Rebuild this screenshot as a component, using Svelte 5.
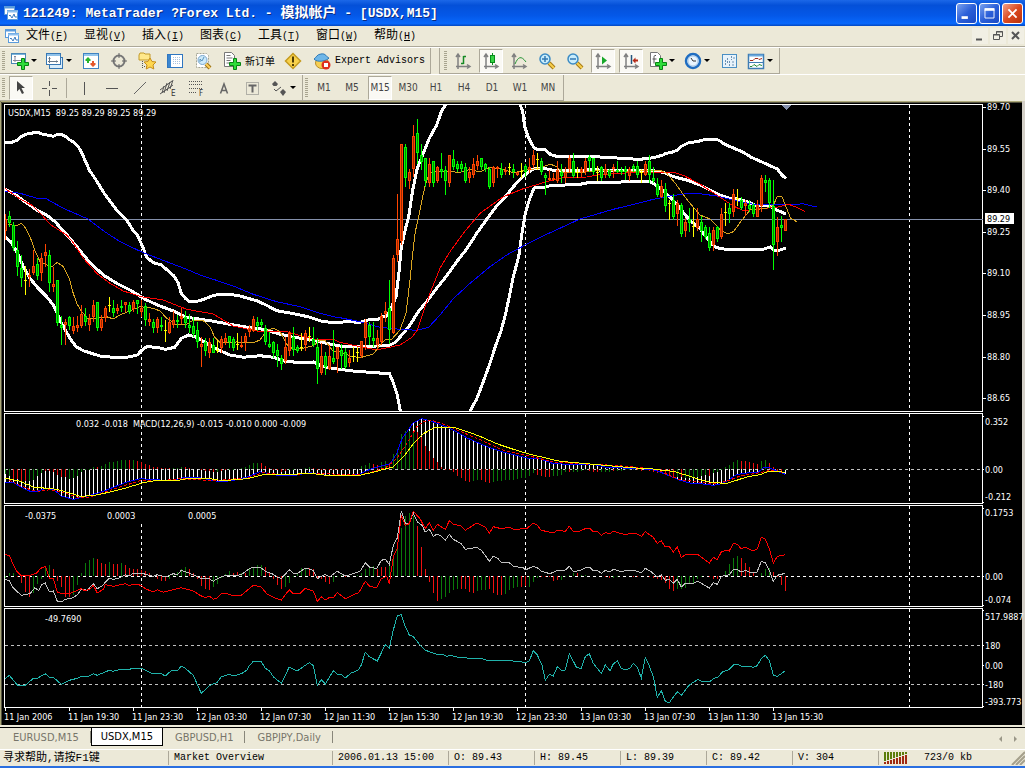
<script lang="ts">
	type Dot = [number, number];

	const menus = [
		['文件', 'F'],
		['显视', 'V'],
		['插入', 'I'],
		['图表', 'C'],
		['工具', 'T'],
		['窗口', 'W'],
		['帮助', 'H']
	];

	const chartIcon =
		'<path d="M4 3v14M2 14.500h13M2 5l2-3 2 3M13 12.500l3 2-3 2" fill="none" stroke="#808080" stroke-width="1.500"/>';
	const plus =
		'<path d="M10.500 6.500h3v4h4v3h-4v4h-3v-4h-4v-3h4z" fill="#2fdc3a" stroke="#078413"/>';
	const lens =
		'<path d="M11 11l5 5" stroke="#a67a14" stroke-width="4"/><path d="M11 11l5 5" stroke="#f8cf4c" stroke-width="2"/><circle cx="7" cy="7" r="5" fill="#c9ecfb" stroke="#3b8bc4" stroke-width="1.500"/>';

	const icons: Record<string, string> = {
		newChart:
			'<rect x=".5" y="1.500" width="14" height="10" fill="#fff" stroke="#4a86b4"/><path d="M1 2.500h13" stroke="#79b4dc"/><path d="M4 4v6M2 8.500h9M3 5l1-1 1 1" fill="none" stroke="#889"/>' + plus,
		profiles:
			'<rect x="3.500" y="5.500" width="13" height="11" fill="#d9edfb" stroke="#3878b4"/><rect x=".5" y="1.500" width="14" height="11" fill="#fff" stroke="#3878b4"/><path d="M1 3h13" stroke="#8fc2ea" stroke-width="2"/><path d="M3.500 5v6M2 9.500h10M2.500 6.500l1-1 1 1M10.500 8.500l1 1-1 1" fill="none" stroke="#678"/>',
		market:
			'<rect x="1.500" y="1.500" width="15" height="15" fill="#fff" stroke="#3f83c2"/><path d="M2 3h14" stroke="#94c6ec" stroke-width="2"/><path d="M6 5l3 3-1 1H7v2H5V9H4L3 8z" fill="#28b52c"/><path d="M11 15l-3-3 1-1h1V9h2v2h1l1 1z" fill="#e4572a"/>',
		target:
			'<circle cx="9" cy="9" r="5.500" fill="none" stroke="#777" stroke-width="2"/><path d="M9 1v5M9 12v5M1 9h5M12 9h5" stroke="#666"/>',
		folder:
			'<path d="M1 3l1-2h4l1 1h5v6H1z" fill="#ffe88a" stroke="#c39a29"/><path d="M4.500 9v8M6 14.500h3" stroke="#555" stroke-dasharray="1 1"/><path d="M12 6l2 3.500 4 .5-3 3 .8 4-3.800-2-3.800 2 .8-4-3-3 4-.5z" fill="#ffd74f" stroke="#c68e1b"/>',
		terminal:
			'<rect x="1.500" y="2.500" width="15" height="13" fill="#fff" stroke="#2f76c0"/><rect x="2" y="3" width="3" height="12" fill="#3b86d0"/><path d="M7 5.500h8M7 7.500h8M7 9.500h8M7 11.500h8" stroke="#a8c2df" stroke-dasharray="1 1"/>',
		tester:
			'<path d="M2.500 1.500h10l2 2v12h-12z" fill="#fff" stroke="#a5a593" stroke-dasharray="2 1"/><path d="M12 12l4 4" stroke="#9b7218" stroke-width="4"/><path d="M12 12l4 4" stroke="#ffd05a" stroke-width="2"/><circle cx="8.500" cy="8" r="4.500" fill="#cdeafa" stroke="#7aa6cc"/><path d="M6 10V7l2 2 2-4" fill="none" stroke="#5892bd"/>',
		order:
			'<path d="M1.500.5h7l3 3v11h-10z" fill="#fff" stroke="#777"/><path d="M3.500 3.500h4M3.500 6h6M3.500 8.500h4M3.500 11h3" stroke="#777"/>' + plus,
		warning:
			'<path d="M9 1.500L16.500 9 9 16.500 1.500 9z" fill="#f8d14b" stroke="#c59b20" stroke-width="1.500"/><path d="M9 4.500v6M9 12v2" stroke="#4f3c05" stroke-width="2"/>',
		expert:
			'<ellipse cx="9" cy="11" rx="6.500" ry="5.500" fill="#f7cf52" stroke="#b98c25"/><path d="M1 7c2-1 3-5 7-5 5-1 5 3 8 4-2 3-12 5-15 1z" fill="#6eb6e8" stroke="#2f79b5"/><circle cx="13" cy="13" r="4.500" fill="#df2f1d"/><rect x="11" y="11" width="4" height="4" fill="#fff"/>',
		bars: chartIcon + '<path d="M9.500 4v8M7 11.500h2.500M9.500 4.500H12" fill="none" stroke="#168a24" stroke-width="1.500"/>',
		candles:
			chartIcon + '<path d="M10.500 1v12" stroke="#088b1b"/><rect x="8.500" y="3.500" width="4" height="7" fill="#35d443" stroke="#088b1b"/>',
		line: chartIcon + '<path d="M5 12c3-7 6-9 11-2" fill="none" stroke="#279436"/>',
		zoomIn: lens + '<path d="M7 4v6M4 7h6" stroke="#3279b3" stroke-width="1.500"/>',
		zoomOut: lens + '<path d="M4 7h6" stroke="#3279b3" stroke-width="1.500"/>',
		scroll: chartIcon + '<path d="M8 4.500l5 4-5 4z" fill="#18a82a"/>',
		shift: chartIcon + '<path d="M9.500 3v9" stroke="#24557c" stroke-width="1.500"/><path d="M10.500 8.500l3-3v2H16v2h-2.500v2z" fill="#b52a17"/>',
		indicator:
			'<path d="M1.500.5h7l3 3v11h-10z" fill="#fff" stroke="#777"/><path d="M7 3.500c-2-.5-2 1-2 2v6M3.500 7h4" fill="none" stroke="#555"/>' + plus,
		clock:
			'<circle cx="9" cy="9" r="7" fill="#e9f5ff" stroke="#1f6dc1" stroke-width="2.500"/><circle cx="9" cy="9" r="5" fill="none" stroke="#a9c9e6"/><path d="M7 6l2 3h3" fill="none" stroke="#333"/>',
		template:
			'<rect x="2.500" y="2.500" width="14" height="13" fill="#e8f3fb" stroke="#4a8fc4"/><path d="M5.500 8v6M7.500 6v5M9.500 9v5M11.500 4v4M14 5v2M13 9v5" stroke="#6d91b2" stroke-dasharray="2 1"/>',
		windows:
			'<rect x="1.500" y="2.500" width="15" height="14" fill="#fff" stroke="#3f7db4" stroke-width="1.500"/><path d="M2 3.500h14" stroke="#6ba9dd" stroke-width="2"/><path d="M2 10.500h14" stroke="#3f7db4"/><path d="M3 8.500h3l2-2h3l1 1 3-1" fill="none" stroke="#a02818"/><path d="M3 14.500h2l2-2 3 2 2-2 3 1" fill="none" stroke="#248b36"/>',
		cursor: '<path d="M5 2l8 7H9.500l2.500 5-2 1-2.500-5L5 12.500z" fill="#444"/>',
		cross: '<path d="M9.500 2v5M9.500 11v6M2 9.500h5M12 9.500h5" stroke="#555"/>',
		vline: '<path d="M9.500 3v13" stroke="#555"/>',
		hline: '<path d="M3 9.500h12" stroke="#555"/>',
		trend: '<path d="M3 15L15 3" stroke="#666"/>',
		channel:
			'<path d="M1 11L13 2M1 15L14 6M5 7l-2 7M8 4L5 14M11 3L8 12M14 1l-3 9" stroke="#555"/><text x="12" y="17">E</text>',
		fibo:
			'<path d="M2 2.500h14M2 5.500h14M2 9.500h14M2 13.500h8" stroke="#555" stroke-dasharray="1 1"/><text x="12" y="17">F</text>',
		letter: '<path d="M5.500 14.500L9 5l3.500 9.500M7 11.500h4" fill="none" stroke="#666" stroke-width="1.500"/>',
		label:
			'<rect x="3.500" y="3.500" width="12" height="12" fill="none" stroke="#777" stroke-dasharray="1 1"/><path d="M5.500 6.500h8M9.500 6.500v7" stroke="#666" stroke-width="2"/>',
		arrows:
			'<path d="M2 5l3-3 3 3-1.500 2h-3z" fill="#555"/><path d="M4 10l2 2 5-4" fill="none" stroke="#555"/><path d="M10 13l3-3 3 3-3 4z" fill="#555"/>'
	};

	const mainTools = [
		{ icon: 'newChart', title: 'New chart', drop: true },
		{ icon: 'profiles', title: 'Profiles', drop: true },
		{ icon: 'market', title: 'Market watch' },
		{ icon: 'target', title: 'Data window' },
		{ icon: 'folder', title: 'Navigator' },
		{ icon: 'terminal', title: 'Terminal' },
		{ icon: 'tester', title: 'Strategy tester' },
		{ icon: 'order', title: 'New order', label: '新订单' },
		{ icon: 'warning', title: 'Editor' },
		{ icon: 'expert', title: 'Experts', label: 'Expert Advisors' }
	];

	const viewTools = [
		{ icon: 'bars', title: 'Bar chart' },
		{ icon: 'candles', title: 'Candlesticks', on: true },
		{ icon: 'line', title: 'Line chart' },
		{ icon: 'zoomIn', title: 'Zoom in' },
		{ icon: 'zoomOut', title: 'Zoom out' },
		{ icon: 'scroll', title: 'Auto scroll', on: true },
		{ icon: 'shift', title: 'Chart shift', on: true },
		{ icon: 'indicator', title: 'Indicators', drop: true },
		{ icon: 'clock', title: 'Periods', drop: true },
		{ icon: 'template', title: 'Templates' },
		{ icon: 'windows', title: 'Indicator windows', drop: true }
	];

	const drawTools = [
		{ icon: 'vline', title: 'Vertical line' },
		{ icon: 'hline', title: 'Horizontal line' },
		{ icon: 'trend', title: 'Trendline' },
		{ icon: 'channel', title: 'Channel' },
		{ icon: 'fibo', title: 'Fibonacci' },
		{ icon: 'letter', title: 'Text' },
		{ icon: 'label', title: 'Text label' },
		{ icon: 'arrows', title: 'Arrows', drop: true }
	];

	const frames = ['M1', 'M5', 'M15', 'M30', 'H1', 'H4', 'D1', 'W1', 'MN'];
	let frame = $state('M15');

	const symbols = ['EURUSD,M15', 'USDX,M15', 'GBPUSD,H1', 'GBPJPY,Daily'];
	let symbol = $state('USDX,M15');

	// Series are kept in thirds of a pixel; bars are four pixels apart.
	const unit = 3;
	const barX = (i: number) => 5 + i * 4;

	function points(top: number, ...parts: [number, string][]): Dot[] {
		return parts.flatMap(([left, text]) =>
			text.split(' ').map((p) => {
				const [x, y] = p.split(',').map(Number);
				return [left + x / unit, top + y / unit] as Dot;
			})
		);
	}

	function line(dots: Dot[]) {
		return dots.map(([x, y]) => `${x.toFixed(1)},${y.toFixed(1)}`).join(' ');
	}

	function at(dots: Dot[], x: number) {
		const n = dots.findIndex((d) => d[0] >= x);
		if (n < 1) return dots[n === 0 ? 0 : dots.length - 1][1];
		const [a, b] = [dots[n - 1], dots[n]];
		return a[1] + ((b[1] - a[1]) * (x - a[0])) / (b[0] - a[0] || 1);
	}

	// colour, high, body top, body bottom, low
	const candles = (
		'R343,357,393,420 G333,348,370,380 G366,376,443,452 G424,450,500,527 G465,505,533,560 Y497,541,541,585 R507,526,532,560 R450,497,518,526 G475,492,527,540 R458,475,518,543 ' +
		'R432,457,467,500 G450,466,550,575 R500,551,560,575 G540,541,668,678 G648,675,683,735 R657,667,676,735 G648,650,677,690 R650,677,692,703 R648,676,683,695 R615,641,677,683 ' +
		'G624,649,667,677 R641,658,676,692 R600,616,650,665 G605,607,683,692 R645,658,683,692 R617,625,653,665 Y590,616,616,635 G600,625,640,650 R613,625,633,643 G600,617,625,635 ' +
		'R605,607,614,635 G605,615,635,643 R600,607,627,635 G600,601,613,643 R600,625,635,650 G610,617,659,677 R640,658,667,677 G657,667,683,700 R650,658,683,700 G650,675,682,692 ' +
		'Y660,691,691,725 R650,667,700,702 R632,659,675,683 G645,659,667,685 R625,649,658,672 G633,650,668,683 G641,676,683,700 G650,677,702,712 G667,690,727,743 R710,733,741,800 ' +
		'G715,725,752,768 R715,725,758,775 G715,735,758,760 Y720,750,750,760 R707,716,743,760 R700,715,725,735 G707,709,725,743 G710,716,743,752 Y700,733,733,750 R708,735,742,745 ' +
		'R700,709,725,752 R675,683,697,710 R648,657,692,695 G650,667,677,692 G657,667,675,683 G675,683,725,735 G697,732,742,743 G723,725,758,775 G733,751,768,800 G765,775,792,810 ' +
		'R710,740,783,792 R692,700,752,768 G682,710,750,768 G735,741,752,760 Y700,742,742,752 R690,700,735,752 Y682,709,709,725 G682,717,735,740 G715,742,808,852 R730,767,818,825 ' +
		'G757,767,800,825 R735,767,808,810 G690,775,785,792 R740,742,777,818 G733,751,767,808 G745,757,800,808 R750,775,790,800 Y742,767,767,785 Y742,757,757,785 R722,724,767,775 ' +
		'R657,667,715,750 G665,676,710,735 G665,715,724,740 R690,715,735,750 R640,649,725,735 R605,633,641,665 G540,625,691,733 R465,475,700,702 R282,418,466,486 R132,133,424,435 ' +
		'G132,142,235,260 R207,217,242,268 R75,109,208,232 G57,100,160,193 G133,166,185,210 G173,175,242,260 R173,193,250,260 G182,184,250,260 R198,200,242,250 G158,208,217,235 ' +
		'G198,209,242,285 R165,166,250,260 G150,176,200,210 G182,192,208,215 G182,192,208,215 G190,200,242,250 R200,217,235,250 R175,192,225,235 R165,183,198,210 G173,175,200,210 ' +
		'G190,192,208,215 G200,208,260,268 R198,200,250,260 R198,200,208,235 G190,208,225,235 R200,210,217,225 Y190,200,200,225 G192,208,217,235 R215,217,226,228 Y190,213,213,235 ' +
		'G192,198,217,230 R175,200,210,220 R150,166,195,203 Y160,176,176,210 G175,184,217,225 G220,226,235,285 R210,234,241,243 R220,234,241,243 R184,210,242,250 G192,215,227,250 ' +
		'R200,217,235,250 R165,175,207,220 G160,183,227,235 Y200,217,217,235 R200,208,217,232 R175,184,217,225 G165,170,184,215 G173,175,217,225 Y198,217,217,243 G198,200,235,243 ' +
		'R192,207,225,235 G208,210,227,235 R192,200,208,235 G182,209,217,220 G200,210,217,225 G198,208,217,240 R200,208,227,243 G192,199,208,217 G182,199,226,235 Y208,217,217,250 ' +
		'R183,193,226,228 G165,184,226,250 G200,234,243,250 G235,251,285,292 R240,258,292,293 G250,268,317,335 Y300,310,310,360 G283,300,350,360 R300,310,343,378 G308,316,402,410 ' +
		'R355,367,392,410 G325,357,368,395 Y325,377,377,410 R325,357,383,392 G348,367,393,427 G375,382,410,418 G380,400,443,452 R380,391,435,452 G378,382,418,425 R325,343,410,418 ' +
		'Y308,335,335,378 G310,325,343,368 R267,283,335,350 Y267,293,293,318 G290,300,325,330 R300,309,317,348 G300,315,328,335 G308,316,343,350 R300,316,350,352 R225,235,317,335 ' +
		'G225,240,250,275 G235,240,310,325 G240,317,434,510 R350,382,425,468 G348,376,383,425 R358,358,392,393'
	)
		.split(' ')
		.map((c, i) => {
			const [high, top, bottom, low] = c.slice(1).split(',').map((v) => 100 + Math.round(Number(v) / unit));
			return { kind: c[0], x: barX(i), high, top, bottom, low };
		});

	const candleColor: Record<string, string> = { R: '#ff4500', G: '#00ff00', Y: '#ffff00' };
	const candleFill: Record<string, string> = { R: '#9c2a00', G: '#008c00', Y: '#ffff00' };

	const bands = [
		points(100,
			[0, '14,127 38,126 52,120 66,108 84,101 112,97 126,102 160,109 172,103 184,103 198,110 206,118 222,127 236,142 248,165 268,210 290,243 312,279 350,330 380,360 400,392 412,405 428,440 440,472 460,488 484,495 504,512 522,528 534,548 544,580 556,595 568,604 590,604 612,598 636,588 656,583 690,583 720,588 740,594 770,602 800,616 830,632 870,639 900,645 930,652 962,663 990,667'],
			[340, '0,667 20,665 60,667 84,660 114,658 130,650 140,648 150,632 168,590 176,525 184,440 198,380 206,350 218,270 232,205 250,160 268,115 290,75 304,35 322,6']
		),
		points(100,
			[340, '538,6 548,35 554,80 566,115 582,143 592,148 616,149 632,164 650,169 700,171 770,170 800,173 860,175 900,179'],
			[620, '60,178 100,173 130,165 136,160 154,158 172,150 184,139 206,128 230,125 250,120 290,118 300,123 314,133 340,144 368,156 394,172 424,185 452,198 472,207 486,225 498,236']
		),
		points(100,
			[0, '14,268 40,280 80,309 112,331 140,345 166,366 190,393 210,415 240,452 270,488 310,525 350,550 390,570 436,598 470,614 520,633 556,651 590,656 630,662 680,671 730,680 790,688 830,700 880,712 930,718 960,726'],
			[340, '0,738 60,740 110,738 150,735 166,727 190,700 210,675 236,633 264,600 290,565 320,527 350,485 380,447 410,400 440,358 470,318 500,286 520,260 548,230 568,215 580,207 600,204 620,207 640,211 680,213 750,209 800,211 900,213'],
			[620, '100,212 130,217 150,226 172,233 200,240 240,255 270,270 300,285 330,295 360,298 390,308 410,317 450,318 470,330 498,342']
		),
		points(100,
			[0, '14,410 32,425 52,458 70,500 90,535 112,562 140,590 160,615 172,640 182,665 196,690 210,715 228,740 250,752 300,768 340,772 380,772 412,765 424,752 440,740 470,742 496,748 524,742 544,715 566,705 590,712 620,730 650,748 690,765 730,772 780,767 820,772 860,785 900,787 940,786 968,800 1000,805'],
			[340, '0,808 40,813 130,820 148,820 160,848 172,885 182,940']
		),
		points(100,
			[340, '386,940 410,897 430,845 450,790 466,740 484,690 496,645 508,590 520,530 536,470 546,400 556,340 568,300 582,264 614,262 630,257 720,253 750,247 820,247 900,244'],
			[620, '90,245 104,252 130,272 154,295 180,325 210,362 240,385 256,408 276,432 290,443 330,450 400,449 430,448 450,441 462,451 480,450 498,444']
		)
	];

	const averages = [
		{
			color: '#0000ff',
			dots: points(100,
				[0, '14,274 60,280 112,295 140,297 190,325 264,357 310,392 360,425 430,458 500,485 560,508 600,525 640,538 700,558 760,583 830,605 900,620 960,640 1000,650'],
				[340, '0,653 60,665 120,682 180,688 230,691 266,682 300,645 340,596 390,550 450,500 500,465 550,438 620,403 720,357 820,328 900,308'],
				[620, '100,298 150,288 200,281 240,281 290,288 340,300 400,313 450,314 520,314 550,311 570,317 592,320']
			)
		},
		{
			color: '#ff0000',
			dots: points(100,
				[0, '14,265 60,297 100,318 126,345 150,373 200,405 220,428 250,475 290,520 330,550 370,573 424,590 490,600 560,628 640,642 700,678 780,695 860,695 940,718 1000,718'],
				[340, '0,727 50,738 110,750 180,735 216,712 232,690 252,630 270,580 300,505 330,455 370,400 420,340 490,290 550,266 620,245 670,232 740,231 780,224 900,216'],
				[620, '160,216 190,226 240,252 290,285 340,318 370,332 410,327 470,322 506,313 530,322 556,335']
			)
		},
		{
			color: '#daa520',
			dots: points(100,
				[0, '24,373 50,378 64,370 76,383 90,410 104,450 120,485 136,493 156,500 172,487 190,500 208,535 218,575 230,610 244,633 262,655 290,655 320,650 340,657 360,645 390,632 420,620 460,625 480,633 500,655 530,675 560,673 580,660 610,662 630,680 644,712 660,728 710,726 760,728 780,720 800,692 820,684 840,695 860,733 880,748 910,745 940,737 960,722 976,722 1000,755'],
				[340, '0,755 30,768 60,773 100,762 120,735 138,718 155,718 180,690 198,640 210,540 218,460 226,395 236,350 246,300 256,255 268,220 300,213 360,217 390,208 420,216 450,202 490,208 520,218 560,210 600,205 630,192 650,200 670,218 720,218 780,210 850,215 900,213'],
				[620, '120,211 140,220 166,250 200,298 240,345 270,357 300,388 322,402 340,395 366,360 390,330 440,325 460,315 472,290 485,288 500,325 512,355 530,365']
			)
		}
	];

	const macd = points(412,
		[0, '14,210 40,212 64,225 90,238 110,238 136,230 160,232 184,252 220,262 250,255 280,247 310,238 340,226 380,210 420,200 450,202 510,206 560,195 600,197 640,206 670,209 700,205 740,196 780,179 820,188 850,192 890,189 930,182 980,190 1030,192 1080,186 1110,172'],
		[380, '0,163 30,155 50,125 66,80 84,55 100,32 125,20 150,26 200,45 230,60 260,77 300,95 330,107 370,120 440,138 480,140 520,155 570,157 640,157 680,166 780,170 820,173'],
		[660, '0,180 30,192 60,205 90,213 120,215 160,220 185,215 205,205 225,190 245,185 270,182 295,180 310,168 325,165 345,175 376,187']
	);
	const macdSlow = points(412,
		[0, '14,198 60,208 100,225 170,232 210,243 240,253 280,251 330,240 370,230 430,212 470,205 530,206 560,200 620,199 670,206 740,200 800,186 840,189 930,184 980,190 1080,190 1130,178'],
		[380, '0,175 40,165 70,135 100,95 130,65 165,46 220,46 250,55 300,73 350,95 400,112 450,127 540,148 640,157 750,167 820,171'],
		[660, '0,174 40,178 80,190 120,203 160,212 200,214 230,205 260,195 300,188 320,180 345,178 376,181']
	);
	const macdSignal = points(412,
		[0, '14,198 60,220 90,233 120,238 150,233 200,245 240,258 270,255 310,242 360,225 420,206 480,206 540,200 640,206 740,198 790,182 850,189 940,184 1080,189 1130,176'],
		[380, '20,165 50,140 80,95 110,45 130,28 155,25 200,40 250,62 300,83 370,115 440,130 520,150 600,155 700,160 820,170'],
		[660, '0,178 60,203 160,215 200,208 240,192 300,182 330,175 376,183']
	);

	const fast = points(412,
		[0, '14,428 28,430 40,458 52,480 64,492 90,490 112,482 120,470 136,463 148,498 160,500 172,540 184,545 208,545 244,530 252,535 268,533 280,520 292,543 310,532 316,518 340,523 376,515 388,521 400,516 424,520 436,530 460,540 472,533 490,541 520,533 544,527 580,537 600,550 616,557 628,552 640,562 652,558 664,545 676,543 700,552 724,550 760,520 784,525 800,545 820,556 844,564 868,533 880,546 900,545 916,529 940,537 952,568 964,554 976,564 990,555 1000,557 1012,542 1036,560 1060,548 1076,542 1096,508 1108,522 1130,528 1144,500 1160,492 1168,516 1180,435 1192,408 1204,310 1216,340 1228,335'],
		[380, '100,298 120,320 136,350 148,332 160,355 172,337 196,352 208,326 220,337 244,342 256,355 290,333 316,345 328,364 340,344 364,350 388,346 400,352 440,350 460,333 472,340 484,355 520,363 532,355 556,358 568,343 580,358 600,357 620,348 630,349 640,360 652,358 664,370 676,362 690,365 700,358 736,368 750,364 770,366 785,373 796,359 820,376 832,394 844,386 856,405 868,404 880,420 892,404'],
		[660, '64,437 76,428 112,426 148,453 160,436 172,443 184,420 196,415 208,417 220,394 232,397 244,411 256,405 280,417 292,411 304,376 316,382 328,410 340,453 352,433 376,428']
	);
	const slow = points(412,
		[0, '14,502 28,506 40,528 64,550 90,545 104,528 116,535 126,517 136,513 148,540 160,537 172,568 184,570 196,562 220,557 232,548 244,532 262,535 280,515 292,530 306,522 328,498 340,502 352,500 376,488 388,492 400,484 430,485 460,493 472,488 496,495 520,485 532,488 544,475 580,488 600,498 628,500 640,508 652,500 676,490 700,492 724,488 748,470 760,465 784,468 796,478 820,487 832,495 844,500 868,473 880,484 892,485 916,468 940,475 952,500 976,487 988,495 1012,478 1036,492 1060,485 1080,478 1096,452 1108,465 1130,470 1144,445 1156,442 1168,458 1180,400 1192,378 1204,298 1216,333 1228,333'],
		[380, '100,303 112,330 126,340 136,360 148,352 160,373 172,366 184,372 196,385 208,367 220,382 244,395 256,412 290,406 304,415 316,430 328,448 340,432 352,438 364,450 388,452 400,463 430,467 436,474 460,463 472,467 484,478 510,485 532,475 556,474 568,463 580,478 600,476 616,467 630,466 640,476 652,475 664,484 676,475 690,480 700,472 720,478 760,475 785,482 796,469 812,478 832,495 844,488 856,505 868,502 880,514 892,502'],
		[660, '64,525 76,514 100,514 112,508 126,515 148,528 160,512 172,517 184,493 208,488 220,473 232,473 244,480 256,475 270,482 290,482 304,448 316,452 328,475 340,508 352,490 376,484']
	);
	const cci = points(605,
		[0, '16,220 28,211 52,240 76,241 100,220 112,220 136,206 148,217 160,217 184,238 208,226 232,220 244,214 268,213 280,206 292,211 328,196 340,199 360,193 388,193 400,190 424,190 460,207 484,206 496,213 514,197 532,197 544,184 556,190 580,211 604,265 628,242 652,232 664,215 688,208 700,213 724,206 740,196 748,182 760,169 784,170 796,190 808,197 820,215 844,235 868,186 892,198 910,185 928,173 940,182 952,240 964,224 976,237 1000,197 1012,207 1024,208 1036,219 1052,205 1075,195 1084,180 1096,142 1108,155 1132,168 1156,119 1168,130 1180,75 1192,32 1204,29 1216,65 1228,90 1240,95 1260,120 1274,135 1310,148 1328,148 1340,154 1352,151 1370,156 1395,157 1408,162 1440,160 1470,168 1530,167'],
		[510, '30,170 46,173 58,168 70,137 82,150 96,180 106,226 118,208 130,213 142,185 156,197 166,195 178,146 200,188 214,190 226,155 238,146 250,175 274,205 286,180 300,197 310,177 322,168 334,190 346,195 360,190 370,175 382,187 394,219 406,157 418,183 430,215 442,277 454,257 466,289 478,293 502,260 514,271 538,240 564,223 576,230 598,231 612,220 624,216 638,200 656,194 670,180 684,178 694,184 718,184 730,187 742,182 754,160 766,151 778,167 790,210 802,214 824,199']
	);

	// Oscillator columns: G rising, R falling, height above the zero line
	const columns = (text: string, zero: number) =>
		text.split(' ').map((c, i) => {
			const h = Number(c.slice(1)) / unit;
			return { x: barX(i), top: Math.round(zero - Math.max(h, 0)), h: Math.round(Math.abs(h)), color: c[0] === 'G' ? '#0a7a0a' : '#f01010' };
		});

	const macdColumns = columns(
		'G-15 G-20 R-30 R-30 R-35 R-35 G-35 G-33 G-20 G-12 R-5 R-5 R-8 R-18 R-25 R-25 G-30 G-28 G-20 G-8 G-3 G-2 G5 R5 G8 G14 G20 G22 G24 G26 G27 R27 G27 R25 R22 R15 R12 R7 R5 R4 ' +
			'R2 R2 G3 G3 G6 R5 R2 R1 R1 R-3 R-5 R-7 R-8 G-8 R-5 R-4 G-3 G-2 G0 G2 G7 G13 G18 G19 R18 R10 R3 R-2 R-4 R-8 R-5 G-3 G-2 G0 G1 G3 G5 R2 R-3 R-3 ' +
			'R-2 R-2 R-3 R-3 R-2 R-2 R-2 R-1 G1 G8 G12 G18 R16 R12 G20 G25 R15 G45 G60 G105 G115 G115 G115 R112 R95 R70 R55 R32 R20 R7 R-2 R-3 R-10 R-20 R-27 R-35 R-38 G-35 G-32 R-33 ' +
			'R-38 R-43 G-40 G-37 G-36 G-33 G-32 G-32 G-30 G-28 G-27 G-20 G-13 R-17 R-22 R-24 R-25 G-20 G-20 G-19 G-10 R-8 G-10 G-10 G-7 G-4 R-6 R-8 R-8 G-10 G-10 G-8 R-7 G-5 G-5 G-4 G-3 G-2 R-4 R-5 ' +
			'R-4 R-6 R-9 R-12 R-12 R-15 R-20 R-25 G-25 R-25 G-27 G-27 G-25 G-25 G-20 G-18 R-22 G-12 G-8 G-3 G6 G13 G22 G27 R25 R25 R21 R17 R16 G25 G27 R18 R5 R-5 R-8 G-3',
		469
	);
	const spreadColumns = columns(
		'G-5 G10 G10 R-2 R-22 R-47 R-62 G-50 G-25 G-8 G28 G34 R20 R-15 R-32 R-62 R-62 G-58 G-28 G10 G40 G47 G55 R50 R38 R37 G41 R37 R37 G40 R33 R25 R22 R20 R19 R16 R8 R-3 R-10 R-14 ' +
			'R-15 G-8 G4 G12 G22 G27 R20 R10 R-8 R-30 R-38 R-42 G-33 G-23 G-5 G5 G15 R10 R12 G10 R8 G22 G25 G32 G33 R28 R12 R-8 R-28 R-40 G-33 G-20 G-4 G8 G24 G24 R24 R20 R-5 R-10 ' +
			'R-18 R-25 G-18 G-4 G2 R-2 R-1 G1 G2 G10 G22 G25 G30 R22 R27 R27 G40 G60 G80 G145 G180 G190 G180 R150 R88 R20 R-18 R-50 R-74 G-70 G-64 G-52 G-42 G-38 R-40 R-40 R-47 R-50 G-46 G-43 ' +
			'G-42 R-40 R-50 R-56 R-56 G-53 G-42 G-35 G-32 R-32 R-30 G-33 G-18 G-5 R-2 R-4 R-4 R-14 R-13 G-12 G-2 G4 G10 R8 G2 G4 G1 R0 R-1 R-1 R-2 R-7 G-5 G-2 G0 R0 R0 R-2 R-2 G0 ' +
			'G0 R-2 R-6 R-10 R-13 R-22 R-40 R-44 G-40 G-40 G-37 G-25 G-20 G-8 G-4 G0 R-4 R-8 R-10 G0 G15 G35 G53 G60 R55 R40 R28 R8 G0 G8 G22 G25 R12 R-4 R-28 R-44',
		576
	);

	const macdBars = candles.map((c) => {
		const y = Math.round(at(macd, c.x));
		return { x: c.x, top: Math.min(469, y), h: Math.abs(469 - y) };
	});

	const panes = [
		{ y: 104, h: 307 },
		{ y: 413, h: 90 },
		{ y: 505, h: 101 },
		{ y: 608, h: 99 }
	];
	const prices = ['89.70', '89.55', '89.40', '89.25', '89.10', '88.95', '88.80', '88.65'];
	const scale: [string, number][] = [
		['0.352', 421],
		['0.00', 469],
		['-0.212', 496],
		['0.1753', 512],
		['0.00', 576],
		['-0.074', 599],
		['517.9887', 616],
		['180', 645],
		['0.00', 665],
		['-180', 684],
		['-393.773', 701]
	];
	const ticks = [416, 469, 502, 508, 576, 605, 610, 645, 665, 684, 706];
	const times = [
		'11 Jan 2006', '11 Jan 19:30', '11 Jan 23:30', '12 Jan 03:30', '12 Jan 07:30', '12 Jan 11:30', '12 Jan 15:30',
		'12 Jan 19:30', '12 Jan 23:30', '13 Jan 03:30', '13 Jan 07:30', '13 Jan 11:30', '13 Jan 15:30'
	];
	const readings: [number, number, string][] = [
		[8, 116, 'USDX,M15\u00a0 89.25 89.29 89.25 89.29'],
		[76, 427, '0.032 -0.018\u00a0 MACD(12,26,9) -0.015 -0.010 0.000 -0.009'],
		[25, 519, '-0.0375'],
		[107, 519, '0.0003'],
		[188, 519, '0.0005'],
		[45, 622, '-49.7690']
	];
</script>

{#snippet appIcon()}
	<svg class="app-icon" viewBox="0 0 16 16" aria-hidden="true">
		<rect x="1.500" y="1.500" width="10" height="8" fill="#fff" stroke="#5a9bdc" />
		<path d="M1 2.500h11" stroke="#5a9bdc" stroke-width="2" />
		<rect x="4.500" y="5.500" width="10" height="9" fill="#fff" stroke="#5a9bdc" />
		<path d="M4 6.500h11" stroke="#8fc0ee" stroke-width="2" />
		<path d="M6 11l1-1 2 3 2-4 1 3h2" fill="none" stroke="#3b7cc0" />
	</svg>
{/snippet}

{#snippet tool(t)}
	<button class="tool" class:on={t.on} class:drop={t.drop} class:named={t.label} title={t.title}>
		<svg class="icon" viewBox="0 0 18 18" aria-hidden="true">{@html icons[t.icon]}</svg>
		{#if t.label}<span>{t.label}</span>{/if}
		{#if t.drop}<i class="caret"></i>{/if}
	</button>
{/snippet}

<div class="window">
	<header class="title-bar">
		{@render appIcon()}
		<h1>121249: MetaTrader ?Forex Ltd. - <span>模拟帐户</span> - [USDX,M15]</h1>
		<button class="sys" aria-label="Minimize">
			<svg viewBox="0 0 21 21"><path d="M5 15h7" stroke="#fff" stroke-width="3" /></svg>
		</button>
		<button class="sys" aria-label="Maximize">
			<svg viewBox="0 0 21 21"><path d="M5.500 6v9.500h10V6" fill="none" stroke="#fff" /><path d="M5 6h11" stroke="#fff" stroke-width="3" /></svg>
		</button>
		<button class="sys close" aria-label="Close">
			<svg viewBox="0 0 21 21"><path d="M6 6l9 9M15 6l-9 9" stroke="#fff" stroke-width="2" /></svg>
		</button>
	</header>

	<nav class="menu-bar">
		{@render appIcon()}
		{#each menus as [name, key]}
			<button class="menu">{name}<span>(<u>{key}</u>)</span></button>
		{/each}
		<div class="mdi">
			<button aria-label="Minimize chart"><svg viewBox="0 0 16 16"><path d="M4 11.500h6" stroke="#555" stroke-width="2" /></svg></button>
			<button aria-label="Restore chart"><svg viewBox="0 0 16 16"><path d="M6.500 6V3.500h6v5H10M6 4h7" fill="none" stroke="#555" /><path d="M3.500 6.500h6v5h-6zM3 7h7" fill="none" stroke="#555" /></svg></button>
			<button aria-label="Close chart"><svg viewBox="0 0 16 16"><path d="M4 4l7 7M11 4l-7 7" stroke="#555" stroke-width="2" /></svg></button>
		</div>
	</nav>

	<div class="tool-row">
		<div class="tool-bar">
			<i class="grip"></i>
			{#each mainTools as t}{@render tool(t)}{/each}
		</div>
		<div class="tool-bar second">
			<i class="grip"></i>
			{#each viewTools as t}{@render tool(t)}{/each}
		</div>
	</div>

	<div class="tool-row">
		<div class="tool-bar">
			<i class="grip"></i>
			{@render tool({ icon: 'cursor', title: 'Cursor', on: true })}
			{@render tool({ icon: 'cross', title: 'Crosshair' })}
			<i class="divider"></i>
			{#each drawTools as t}{@render tool(t)}{/each}
		</div>
		<div class="tool-bar">
			<i class="grip"></i>
			{#each frames as f}
				<button class="tool frame" class:on={f === frame} onclick={() => (frame = f)}>{f}</button>
			{/each}
		</div>
	</div>

	<main class="chart">
		<svg viewBox="0 101 1025 624" role="img" aria-label="USDX,M15">
			<defs>
				<clipPath id="price"><rect x="5" y="105" width="977" height="306" /></clipPath>
			</defs>
			<rect x="0" y="101" width="1025" height="624" fill="#000" />
			<path d="M0.500 725V101.500H1023" fill="none" stroke="#aca878" />
			<path d="M1.500 725V102.500H1023" fill="none" stroke="#55533f" />
			<path d="M1023.500 101v624" stroke="#d4d0c8" stroke-width="3" />

			<g class="crisp">
				{#each panes as p}
					<rect x="4.500" y={p.y + 0.5} width="978" height={p.h} class="pane" />
				{/each}
				{#each [141.5, 525.5, 909.5] as x}
					<path d="M{x} 105V411M{x} 414V503M{x} {x < 200 ? 524 : 506}V606M{x} 609V707" class="dash" />
				{/each}
				<path d="M5 219.500H983" stroke="#8490ac" />
				<path d="M5 469.500H983" class="dash zero" />
				<path d="M5 576.500H983" class="dash" />
				<path d="M5 645.500H983M5 684.500H983" class="dash level" />
				<path d="M781 105h10l-5 5z" fill="#8490ac" />

				<g clip-path="url(#price)">
					{#each bands as b}
						<polyline points={line(b)} stroke="#fff" stroke-width="3" />
					{/each}
					{#each averages as a}
						<polyline points={line(a.dots)} stroke={a.color} />
					{/each}
					{#each candles as c}
						<rect x={c.x} y={c.high} width="1" height={c.low - c.high} fill={candleColor[c.kind]} />
						{#if c.kind === 'Y'}
							<rect x={c.x - 1} y={c.top} width="3" height="1" fill={candleColor.Y} />
						{:else}
							<rect x={c.x - 1} y={c.top} width="3" height={Math.max(c.bottom - c.top, 2)} fill={candleColor[c.kind]} />
							<rect x={c.x} y={c.top + 1} width="1" height={Math.max(c.bottom - c.top - 2, 0)} fill={candleFill[c.kind]} />
						{/if}
					{/each}
				</g>

				{#each macdBars as b}
					<rect x={b.x} y={b.top} width="1" height={b.h} fill="#fff" />
				{/each}
				{#each macdColumns as b}
					<rect x={b.x} y={b.top} width="1" height={b.h} fill={b.color} />
				{/each}
				<polyline points={line(macd)} stroke="#0000ff" />
				<polyline points={line(macdSignal)} stroke="#ff0000" stroke-dasharray="3 2" />
				<polyline points={line(macdSlow)} stroke="#ffff00" />

				{#each spreadColumns as b}
					<rect x={b.x} y={b.top} width="1" height={b.h} fill={b.color} />
				{/each}
				<polyline points={line(slow)} stroke="#c0c0c0" />
				<polyline points={line(fast)} stroke="#ff0000" />
				<polyline points={line(cci)} stroke="#20b2aa" />

				{#each prices as _, i}
					<rect x="983" y={107 + Math.round(i * 41.6)} width="3" height="1" fill="#fff" />
				{/each}
				{#each ticks as y}
					<rect x="983" {y} width="1" height="1" fill="#fff" />
				{/each}
				{#each times as _, i}
					<rect x={5 + i * 64} y="708" width="1" height="3" fill="#fff" />
				{/each}
			</g>

			{#each prices as p, i}
				<text x="987" y={110 + Math.round(i * 41.6)}>{p}</text>
			{/each}
			<rect x="985" y="213" width="29" height="11" fill="#fff" />
			<text x="987" y="222" class="current">89.29</text>
			{#each scale as [label, y]}
				<text x="985" y={y + 4}>{label}</text>
			{/each}
			{#each times as t, i}
				<text x={4 + i * 64} y="720">{t}</text>
			{/each}
			{#each readings as [x, y, label]}
				<text {x} {y}>{label}</text>
			{/each}
		</svg>
	</main>

	<div class="tabs" role="tablist">
		{#each symbols as s}
			<button role="tab" aria-selected={s === symbol} class:active={s === symbol} onclick={() => (symbol = s)}>{s}</button>
		{/each}
		<span class="scroll">
			<button aria-label="Scroll left"><i class="left"></i></button>
			<button aria-label="Scroll right"><i class="right"></i></button>
		</span>
	</div>

	<footer class="status">
		<span class="help">寻求帮助,请按F1键</span>
		<span class="profile">Market Overview</span>
		<span class="date">2006.01.13 15:00</span>
		<span>O: 89.43</span>
		<span>H: 89.45</span>
		<span>L: 89.39</span>
		<span>C: 89.42</span>
		<span>V: 304</span>
		<span class="traffic">
			<svg viewBox="0 0 24 12" aria-hidden="true">
				{#each Array(8) as _, i}
					<rect x={i * 3} y="0" width="2" height={9 - i} fill="#5c7d0c" />
					<rect x={i * 3} y={10 - i} width="2" height={2 + i} fill="#a02a12" />
				{/each}
			</svg>
			723/0 kb
		</span>
		<svg class="resize" viewBox="0 0 14 14" aria-hidden="true"><path d="M1 14L14 1M5 14l9-9M9 14l5-5" stroke="#a5a08c" stroke-width="2" /></svg>
	</footer>
</div>

<style>
	:global(body) {
		background: #ece9d8;
	}

	.window {
		font-family: 'Liberation Mono', 'Noto Sans CJK SC', monospace;
		font-size: 10px;
		color: #000;
		background: #ece9d8;
		border-bottom: 2px solid #2a6fe0;
	}

	button {
		padding: 0;
		border: 0;
		background: none;
		color: inherit;
		font: inherit;
	}

	svg {
		display: block;
	}

	.title-bar {
		display: flex;
		align-items: center;
		gap: 2px;
		height: 26px;
		padding: 0 2px 0 3px;
		background: linear-gradient(#1c68e8, #0450d8 20%, #0458e8 60%, #0868fc 90%, #0448c0);
		color: #fff;
	}

	.title-bar h1 {
		flex: 1;
		margin: 0 0 0 2px;
		font-size: 13px;
		line-height: 20px;
		font-weight: bold;
		white-space: nowrap;
		text-shadow: 1px 1px #0a2a80;
	}

	.title-bar h1 span {
		font-size: 14px;
	}

	.app-icon {
		width: 16px;
		height: 16px;
		flex-shrink: 0;
	}

	.sys {
		width: 21px;
		height: 21px;
		border: 1px solid #fff;
		border-radius: 3px;
		background: linear-gradient(135deg, #7ba2ef, #2b5fd8 50%, #1a49c4);
	}

	.sys.close {
		background: linear-gradient(135deg, #f0a088, #dc4a20 50%, #b8320c);
	}

	.menu-bar {
		display: flex;
		align-items: center;
		height: 20px;
		padding: 0 1px 0 4px;
		border-bottom: 1px solid #aca899;
	}

	.menu {
		width: 58px;
		padding-left: 6px;
		text-align: left;
		font-size: 12px;
		line-height: 18px;
		white-space: nowrap;
	}

	.menu span {
		font-size: 10px;
	}

	.mdi {
		display: flex;
		gap: 2px;
		margin-left: auto;
	}

	.mdi button {
		width: 16px;
		height: 16px;
		background: #f1efe4;
	}

	.tool-row {
		display: flex;
		height: 27px;
		box-sizing: border-box;
		border-top: 1px solid #fff;
	}

	.tool-bar {
		display: flex;
		align-items: center;
		gap: 4px;
		padding: 0 3px 0 2px;
		border-right: 1px solid #aca899;
		border-bottom: 1px solid #aca899;
	}

	.tool-bar.second {
		margin-left: 8px;
		padding-left: 4px;
		border-left: 1px solid #aca899;
	}

	.grip {
		width: 3px;
		height: 19px;
		background: repeating-linear-gradient(#a8a48f 0 1px, #ece9d8 1px 2px);
	}

	.divider {
		width: 1px;
		height: 20px;
		margin: 0 1px;
		background: #aca899;
	}

	.tool {
		display: flex;
		align-items: center;
		justify-content: center;
		box-sizing: border-box;
		width: 24px;
		height: 24px;
		flex-shrink: 0;
	}

	.tool.drop {
		width: 31px;
		justify-content: flex-start;
		padding-left: 2px;
		gap: 2px;
	}

	.tool.named {
		width: auto;
		justify-content: flex-start;
		gap: 4px;
		padding: 0 2px 0 4px;
		white-space: nowrap;
	}

	.tool.on {
		background: #faf9f4;
		border: 1px solid #aca899;
		border-right-color: #fff;
		border-bottom-color: #fff;
	}

	.icon {
		width: 18px;
		height: 18px;
		flex-shrink: 0;
		overflow: visible;
	}

	.icon :global(text) {
		font: 8px 'DejaVu Sans Condensed', 'DejaVu Sans', sans-serif;
		fill: #333;
	}

	.caret {
		border: 3px solid transparent;
		border-top-color: #000;
		border-bottom: 0;
	}

	.frame {
		font-family: 'DejaVu Sans Condensed', 'DejaVu Sans', sans-serif;
		color: #444;
	}

	.chart svg {
		width: 100%;
	}

	.chart text {
		font-family: 'DejaVu Sans Condensed', 'DejaVu Sans', sans-serif;
		font-size: 9px;
		fill: #fff;
	}

	.chart .current {
		fill: #000;
	}

	.crisp {
		shape-rendering: crispEdges;
	}

	.chart polyline,
	.pane {
		fill: none;
	}

	.pane {
		stroke: #fff;
	}

	.dash {
		stroke: #fff;
		stroke-dasharray: 3 3;
	}

	.dash.zero,
	.dash.level {
		stroke: #c0c0c0;
	}

	.tabs {
		display: flex;
		height: 22px;
		margin-top: 2px;
		padding-left: 1px;
		border-top: 1px solid #000;
		box-sizing: border-box;
		font-family: 'DejaVu Sans Condensed', 'DejaVu Sans', sans-serif;
		font-size: 11px;
		color: #77756a;
	}

	.tabs > button {
		height: 18px;
		padding: 0 12px;
		position: relative;
	}

	.tabs > button:not(.active)::after {
		content: '';
		position: absolute;
		right: 0;
		top: 3px;
		height: 12px;
		border-right: 1px solid #88867a;
	}

	.tabs > button.active {
		padding: 0 9px;
		border: 1px solid #000;
		border-top: 0;
		background: #fff;
		color: #000;
	}

	.scroll {
		display: flex;
		align-items: center;
		gap: 12px;
		margin-left: auto;
		padding-right: 8px;
	}

	.scroll i {
		display: block;
		border: 3px solid transparent;
	}

	.scroll .left {
		border-right-color: #9a9788;
		border-left: 0;
	}

	.scroll .right {
		border-left-color: #9a9788;
		border-right: 0;
	}

	.status {
		display: flex;
		align-items: center;
		height: 16px;
		border-top: 1px solid #fff;
		line-height: 14px;
		white-space: nowrap;
	}

	.status span {
		box-sizing: border-box;
		width: 86px;
		padding-left: 5px;
		border-left: 1px solid #aca899;
	}

	.status .help {
		width: 168px;
		padding-left: 3px;
		border: 0;
		font-size: 11px;
	}

	.status .profile {
		width: 164px;
	}

	.status .date {
		width: 116px;
	}

	.status .traffic {
		display: flex;
		flex: 1;
		align-items: center;
		gap: 16px;
	}

	.traffic svg {
		width: 24px;
		height: 12px;
	}

	.resize {
		width: 14px;
		height: 14px;
	}
</style>
